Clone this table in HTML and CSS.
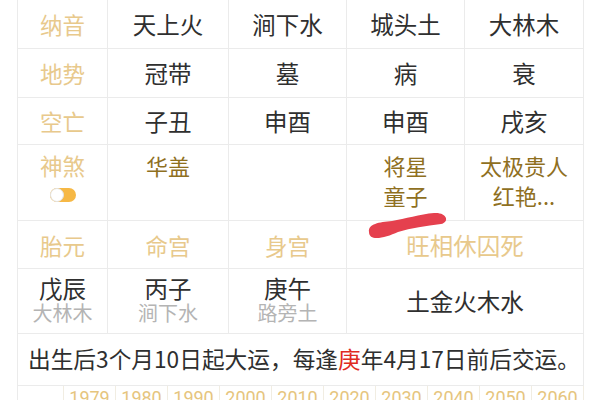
FILE: index.html
```html
<!DOCTYPE html>
<html lang="zh">
<head>
<meta charset="utf-8">
<link rel="stylesheet" href="styles.css">
</head>
<body>
<div class="page">
  <div class="chart">
    <div class="cell label">纳音</div>
    <div class="cell">天上火</div>
    <div class="cell">涧下水</div>
    <div class="cell">城头土</div>
    <div class="cell">大林木</div>

    <div class="cell label">地势</div>
    <div class="cell">冠带</div>
    <div class="cell">墓</div>
    <div class="cell">病</div>
    <div class="cell">衰</div>

    <div class="cell label">空亡</div>
    <div class="cell">子丑</div>
    <div class="cell">申酉</div>
    <div class="cell">申酉</div>
    <div class="cell">戌亥</div>

    <div class="cell label top stack">
      <span>神煞</span>
      <span class="toggle"><span class="knob"></span></span>
    </div>
    <div class="cell top gold">华盖</div>
    <div class="cell top gold"></div>
    <div class="cell top gold stack"><span>将星</span><span>童子</span></div>
    <div class="cell top gold stack"><span>太极贵人</span><span>红艳...</span></div>

    <div class="cell label">胎元</div>
    <div class="cell label">命宫</div>
    <div class="cell label">身宫</div>
    <div class="cell label big span2">旺相休囚死</div>

    <div class="cell pair"><span class="main">戊辰</span><span class="sub">大林木</span></div>
    <div class="cell pair"><span class="main">丙子</span><span class="sub">涧下水</span></div>
    <div class="cell pair"><span class="main">庚午</span><span class="sub">路旁土</span></div>
    <div class="cell span2">土金火木水</div>

    <div class="cell note">出生后3个月10日起大运，每逢<span class="red">庚</span>年4月17日前后交运。</div>

    <div class="years">
      <div class="year"></div>
      <div class="year">1979</div>
      <div class="year">1980</div>
      <div class="year">1990</div>
      <div class="year">2000</div>
      <div class="year">2010</div>
      <div class="year">2020</div>
      <div class="year">2030</div>
      <div class="year">2040</div>
      <div class="year">2050</div>
      <div class="year">2060</div>
    </div>
  </div>
  <svg class="scribble" width="600" height="400" viewBox="0 0 600 400">
    <path d="M369,232 C368,224 379,222 392,221 C405,219 420,214 434,213 C447,212 450,222 441,224 C426,226 411,228 398,232 C385,238 369,242 369,232 Z" fill="#e5404e"/>
  </svg>
</div>
</body>
</html>
```

FILE: styles.css
```css
html, body {
  margin: 0;
  padding: 0;
  background: #ffffff;
}

body {
  font-family: "Noto Sans CJK SC", "Noto Sans", sans-serif;
  color: #2f2f2f;
  width: 600px;
  height: 400px;
  overflow: hidden;
}

.page {
  position: relative;
  width: 600px;
  height: 400px;
}

.chart {
  margin-left: 17px;
  width: 567px;
  display: grid;
  grid-template-columns: 90px 121px 118px 118px 119px;
  grid-template-rows: 49px 49px 47px 76px 48px 65px 52px 40px;
  border-left: 1px solid #ebebeb;
  box-sizing: border-box;
}

.cell {
  box-sizing: border-box;
  border-right: 1px solid #ebebeb;
  border-bottom: 1px solid #ebebeb;
  display: flex;
  align-items: center;
  justify-content: center;
  font-size: 23.5px;
  line-height: 30px;
  white-space: nowrap;
}

.label {
  color: #e8c98c;
  font-size: 22.5px;
}

.label.big {
  font-size: 23.5px;
}

.gold {
  color: #8f701f;
  font-size: 22px;
}

.top {
  align-items: flex-start;
  padding-top: 5px;
}

.stack {
  flex-direction: column;
  align-items: center;
  justify-content: flex-start;
}

.toggle {
  margin-top: 8px;
  width: 26px;
  height: 14px;
  border-radius: 7px;
  background: #f6b845;
  display: flex;
  align-items: center;
}

.knob {
  width: 12px;
  height: 12px;
  border-radius: 50%;
  background: #ffffff;
  border: 1px solid #e2e2e2;
}

.span2 {
  grid-column: span 2;
}

.pair {
  flex-direction: column;
  padding-bottom: 2px;
}

.pair .main {
  font-size: 23.5px;
  line-height: 25px;
}

.pair .sub {
  font-size: 20px;
  line-height: 24px;
  color: #b4b4b4;
}

.note {
  grid-column: span 5;
  justify-content: flex-start;
  padding-left: 10px;
  font-size: 22.7px;
  padding-bottom: 2px;
}

.red {
  color: #e02a22;
}

.years {
  grid-column: span 5;
  display: grid;
  grid-template-columns: 46px repeat(10, 1fr);
}

.year {
  box-sizing: border-box;
  border-right: 1px solid #f1ede2;
  color: #e6c57e;
  font-family: "Roboto", "Noto Sans", sans-serif;
  font-size: 18px;
  line-height: 18px;
  padding-top: 3px;
  text-align: center;
}

.scribble {
  position: absolute;
  left: 0;
  top: 0;
  pointer-events: none;
}
```
